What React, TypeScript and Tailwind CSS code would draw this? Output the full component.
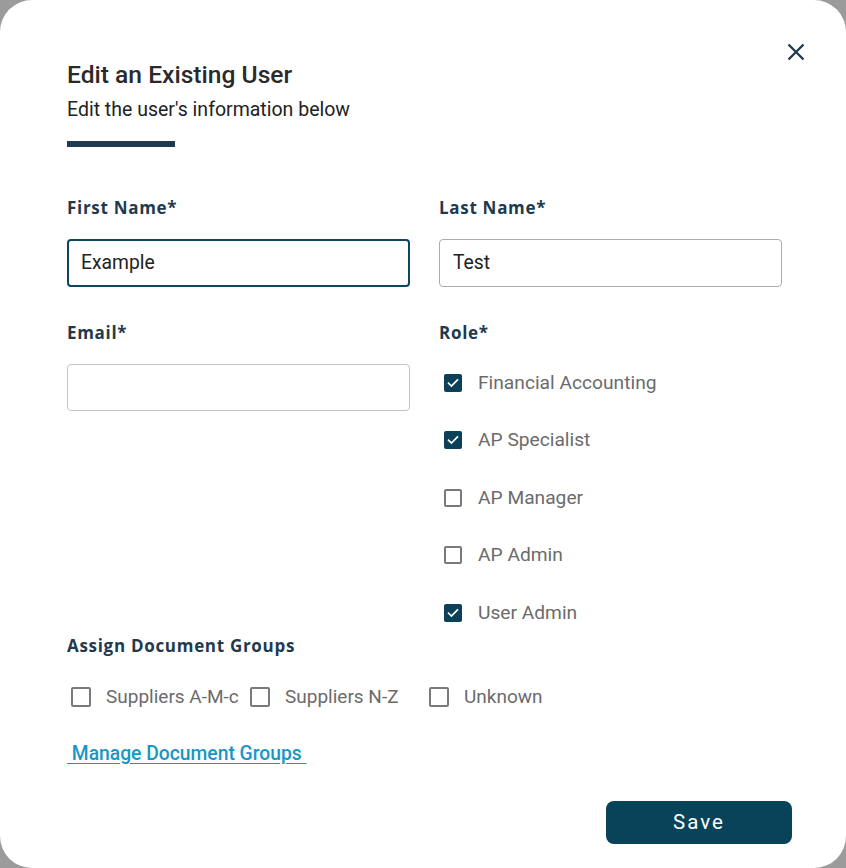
import React from "react";

const Check = ({ checked, size = 18 }: { checked: boolean; size?: number }) =>
  checked ? (
    <span
      className="flex shrink-0 items-center justify-center rounded-[2px] bg-[#0b4059]"
      style={{ width: size, height: size }}
    >
      <svg width="14" height="14" viewBox="0 0 24 24" fill="none">
        <path d="M4.5 12.5l4.8 4.8L19.5 7" stroke="#fff" strokeWidth="3" strokeLinecap="square" />
      </svg>
    </span>
  ) : (
    <span
      className="shrink-0 rounded-[2px] border-2 border-[#7a7a7a] bg-white"
      style={{ width: size, height: size }}
    />
  );

const labelCls =
  "text-[17px] font-bold leading-[20px] tracking-[0.7px] text-[#1f3a4e] [font-family:'Open_Sans',sans-serif]";

export default function App() {
  const roles = [
    { name: "Financial Accounting", checked: true },
    { name: "AP Specialist", checked: true },
    { name: "AP Manager", checked: false },
    { name: "AP Admin", checked: false },
    { name: "User Admin", checked: true },
  ];
  const groups = ["Suppliers A-M-c", "Suppliers N-Z", "Unknown"];
  return (
    <div className="h-[868px] w-[846px] bg-[#9b9b9b] [font-family:Roboto,sans-serif]">
      <div className="relative h-full w-full rounded-[32px] bg-white pl-[67px] pr-[64px] pt-[60px]">
        <button className="absolute left-[787px] top-[43px] flex h-[18px] w-[18px] items-center justify-center">
          <svg width="18" height="18" viewBox="0 0 18 18" fill="none">
            <path d="M1.5 1.5l15 15M16.5 1.5l-15 15" stroke="#1e3a4c" strokeWidth="2.3" />
          </svg>
        </button>
        <h2 className="text-[24.6px] font-medium leading-[30px] text-[#2a2a2a]">Edit an Existing User</h2>
        <p className="mt-[8px] text-[19.5px] leading-[24px] text-[#222]">Edit the user's information below</p>
        <div className="mt-[19px] h-[6px] w-[108px] bg-[#1f3b4f]" />

        <div className="mt-[51px] grid grid-cols-2 gap-x-[29px]">
          <div>
            <div className={labelCls}>First Name*</div>
            <div className="mt-[21px] flex h-[48px] items-center rounded-[4px] border-2 border-[#0c4660] px-[12px] text-[19.3px] text-[#222]">
              Example
            </div>
          </div>
          <div>
            <div className={labelCls}>Last Name*</div>
            <div className="mt-[21px] flex h-[48px] items-center rounded-[4px] border border-[#ababab] px-[13px] text-[19.3px] text-[#222]">
              Test
            </div>
          </div>
          <div className="mt-[36px]">
            <div className={labelCls}>Email*</div>
            <div className="mt-[21px] h-[47px] rounded-[4px] border border-[#c4c4c4]" />
          </div>
          <div className="mt-[36px]">
            <div className={labelCls}>Role*</div>
            <div className="mt-[27.6px] flex flex-col gap-[33.5px]">
              {roles.map((r) => (
                <div key={r.name} className="flex h-[24px] items-center gap-[16px] pl-[5px]">
                  <Check checked={r.checked} />
                  <span className="text-[19.2px] leading-[24px] text-[#6b6b6b]">{r.name}</span>
                </div>
              ))}
            </div>
          </div>
        </div>

        <div className={"mt-[11px] " + labelCls}>Assign Document Groups</div>
        <div className="mt-[29.5px] flex pl-[4px]">
          {groups.map((g) => (
            <div key={g} className="flex h-[24px] w-[179px] items-center gap-[15px]">
              <Check checked={false} size={20} />
              <span className="whitespace-nowrap text-[19px] leading-[24px] text-[#6b6b6b]">{g}</span>
            </div>
          ))}
        </div>

        <div className="mt-[32.5px] leading-[24px]">
          <a className="text-[19.3px] font-medium text-[#1896c6] underline underline-offset-[3px]" href="#">
            {"\u00a0Manage Document Groups\u00a0"}
          </a>
        </div>

        <div className="-mr-[10px] mt-[34.5px] flex justify-end">
          <button className="h-[43px] w-[186px] rounded-[8px] bg-[#08435a] text-[20.5px] tracking-[2px] text-white">
            Save
          </button>
        </div>
      </div>
    </div>
  );
}
